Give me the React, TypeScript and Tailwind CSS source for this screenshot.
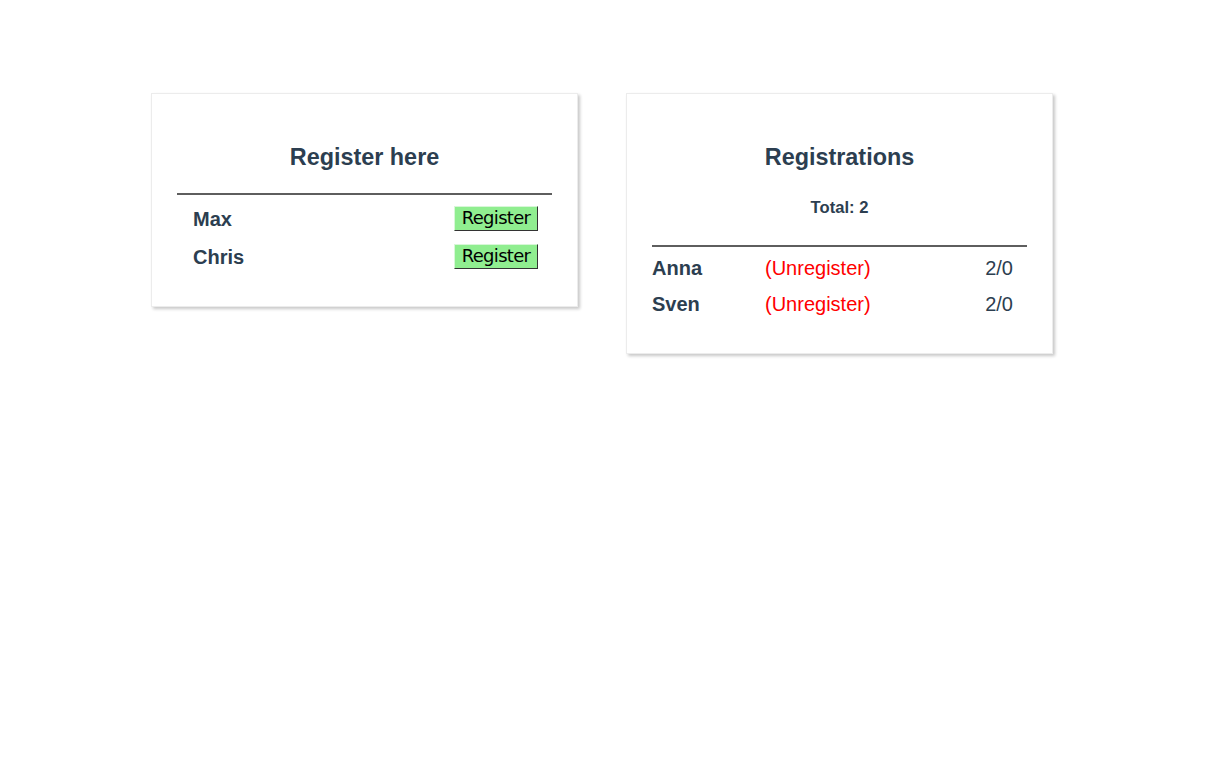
const ink = "text-[#2c3e50]";

function Card({ children }: { children: React.ReactNode }) {
  return (
    <div className="w-[427px] border border-[#ececec] bg-white shadow-[2px_2px_3px_rgba(0,0,0,0.22)] px-[25px]">
      {children}
    </div>
  );
}

function RegisterCard() {
  const people = ["Max", "Chris"];
  return (
    <Card>
      <h2 className={`pt-[50px] text-center text-[23.4px] leading-[27px] font-bold ${ink}`}>
        Register here
      </h2>
      <div className="mt-[22px] h-[2px] bg-[#5e5e5e]" />
      <div className="pt-[5px] pb-[30px]">
        {people.map((p) => (
          <div key={p} className="flex h-[38px] items-center justify-between pl-[16px] pr-[14px]">
            <span className={`text-[20px] font-bold ${ink}`}>{p}</span>
            <button className="mb-[2px] h-[25px] w-[84px] bg-[#90ee90] text-[18px] leading-none text-black font-['DejaVu_Sans',sans-serif] tracking-[-0.7px] border border-[#d8f7d8] border-r-[#333] border-b-[#333]">
              Register
            </button>
          </div>
        ))}
      </div>
    </Card>
  );
}

function RegistrationsCard() {
  const regs = [
    { name: "Anna", score: "2/0" },
    { name: "Sven", score: "2/0" },
  ];
  return (
    <Card>
      <h2 className={`pt-[50px] text-center text-[23.4px] leading-[27px] font-bold ${ink}`}>
        Registrations
      </h2>
      <p className={`mt-[27px] text-center text-[16.6px] leading-[19px] font-bold ${ink}`}>Total: 2</p>
      <div className="mt-[28px] h-[2px] bg-[#5e5e5e]" />
      <div className="pt-[3px] pb-[31px]">
        {regs.map((r) => (
          <div key={r.name} className="flex h-[36px] items-center text-[20px]">
            <span className={`w-[113px] font-bold ${ink}`}>{r.name}</span>
            <span className="flex-1 text-[#ff0000]">(Unregister)</span>
            <span className={`pr-[14px] ${ink}`}>{r.score}</span>
          </div>
        ))}
      </div>
    </Card>
  );
}

export default function App() {
  return (
    <div className="min-h-screen bg-white font-['Liberation_Sans',Arial,sans-serif]">
      <div className="flex items-start gap-[48px] pl-[151px] pt-[93px]">
        <RegisterCard />
        <RegistrationsCard />
      </div>
    </div>
  );
}
